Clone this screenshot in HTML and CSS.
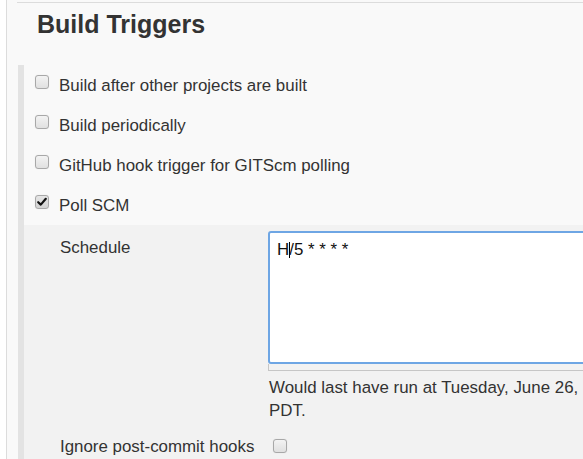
FILE: index.html
```html
<!DOCTYPE html>
<html lang="en">
<head>
<meta charset="utf-8">
<title>Build Triggers</title>
<link rel="stylesheet" href="styles.css">
</head>
<body>
<div class="page">
  <div class="section-header">
    <h2 class="section-title">Build Triggers</h2>
  </div>
  <div class="section-body">
    <div class="trigger-row"><span class="checkbox"></span><span class="trigger-label">Build after other projects are built</span></div>
    <div class="trigger-row"><span class="checkbox"></span><span class="trigger-label">Build periodically</span></div>
    <div class="trigger-row"><span class="checkbox"></span><span class="trigger-label">GitHub hook trigger for GITScm polling</span></div>
    <div class="trigger-row"><span class="checkbox checked"><svg viewBox="0 0 14 14" width="14" height="14"><path d="M3.2 7.2 L5.8 9.6 L10.8 3.8" fill="none" stroke="#111" stroke-width="2.2" stroke-linecap="round" stroke-linejoin="round"/></svg></span><span class="trigger-label">Poll SCM</span></div>
    <div class="nested">
      <div class="field-row">
        <div class="field-label schedule-label">Schedule</div>
        <div class="field-control">
          <div class="textarea">H<span class="caret"></span>/5 * * * *</div>
          <div class="textarea-handle"></div>
          <div class="help">Would last have run at Tuesday, June 26, 2018 2:29:41 PM PDT; would next run at Tuesday, June 26, 2018 2:34:41 PM PDT.</div>
        </div>
      </div>
      <div class="field-row ignore-row">
        <div class="field-label">Ignore post-commit hooks</div>
        <div class="field-control"><span class="checkbox ignore-box"></span></div>
      </div>
    </div>
  </div>
</div>
</body>
</html>
```
FILE: styles.css
```css
html, body {
  margin: 0;
  padding: 0;
  overflow: hidden;
  background: #fff;
}
body {
  font-family: "Liberation Sans", Arial, sans-serif;
  font-size: 16.9px;
  color: #333;
}
.page {
  margin-left: 6px;
  border-left: 1px solid #dcdcdc;
  background: #f9f9f9;
  height: 100vh;
  padding-top: 2px;
  box-sizing: border-box;
}
.section-header {
  margin-left: 10px;
  border-top: 1px solid #dcdcdc;
  padding: 6px 0 0 20px;
}
.section-title {
  margin: 0;
  font-size: 25px;
  line-height: 30px;
  font-weight: bold;
  color: #333;
}
.section-body {
  margin: 26px 0 0 11px;
  border-left: 6px solid #e3e3e3;
  min-height: 500px;
}
.trigger-row {
  display: flex;
  align-items: flex-start;
  gap: 10px;
  padding: 8.5px 0 8.5px 11px;
  line-height: 23px;
}
.checkbox {
  flex: none;
  display: block;
  width: 14px;
  height: 14px;
  box-sizing: border-box;
  margin-top: 1.5px;
  border: 1px solid #a8a8a8;
  border-radius: 3px;
  background: linear-gradient(#f3f3f3, #e0e0e0);
  box-shadow: 0 0 1px rgba(0,0,0,0.15);
  position: relative;
}
.checkbox svg {
  position: absolute;
  left: -1px;
  top: -1px;
}
.checkbox.checked {
  background: linear-gradient(#e6e6e6, #d2d2d2);
}
.nested {
  background: #f2f2f2;
  padding-top: 6px;
  min-height: 300px;
}
.field-row {
  display: flex;
  align-items: flex-start;
}
.field-label {
  flex: none;
  width: 208px;
  padding-left: 36px;
  line-height: 23px;
}
.schedule-label {
  padding-top: 4.5px;
}
.field-control {
  flex: none;
  width: 920px;
}
.textarea {
  width: 920px;
  height: 133px;
  box-sizing: border-box;
  border: 2px solid #6ea6e4;
  border-radius: 3px;
  background: #fff;
  padding: 6.5px 7px;
  color: #111;
  line-height: 19px;
  white-space: pre;
}
.caret {
  display: inline-block;
  width: 1px;
  height: 16px;
  margin-right: -1px;
  background: #000;
  vertical-align: -3px;
}
.textarea-handle {
  height: 6px;
  border: 1px solid #c6c6c6;
  border-top: none;
}
.help {
  margin-top: 4.75px;
  padding-left: 1px;
  line-height: 23px;
  color: #333;
}
.ignore-row {
  margin-top: 13px;
}
.ignore-box {
  margin-top: 4.25px;
  margin-left: 5px;
}
```
